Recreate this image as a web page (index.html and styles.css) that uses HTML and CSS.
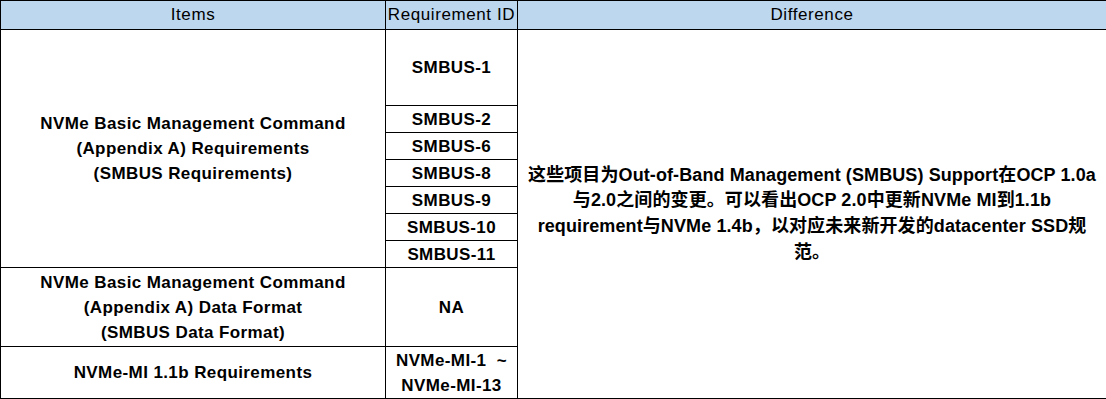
FILE: index.html
```html
<!DOCTYPE html>
<html lang="zh">
<head>
<meta charset="utf-8">
<link rel="stylesheet" href="styles.css">
</head>
<body>
<table class="sheet">
  <colgroup>
    <col class="c-items">
    <col class="c-req">
    <col class="c-diff">
  </colgroup>
  <thead>
    <tr class="head">
      <th>Items</th>
      <th>Requirement ID</th>
      <th>Difference</th>
    </tr>
  </thead>
  <tbody>
    <tr class="r-tall">
      <td rowspan="7" class="item">NVMe Basic Management Command<br>(Appendix A) Requirements<br>(SMBUS Requirements)</td>
      <td class="req">SMBUS-1</td>
      <td rowspan="9" class="diff"><span class="ln">这些项目为Out-of-Band Management (SMBUS) Support在OCP 1.0a</span><span class="ln">与2.0之间的变更。可以看出OCP 2.0中更新NVMe MI到1.1b</span><span class="ln">requirement与NVMe 1.4b，以对应未来新开发的datacenter SSD规</span><span class="ln">范。</span></td>
    </tr>
    <tr class="r-s"><td class="req">SMBUS-2</td></tr>
    <tr class="r-s"><td class="req">SMBUS-6</td></tr>
    <tr class="r-s"><td class="req">SMBUS-8</td></tr>
    <tr class="r-s"><td class="req">SMBUS-9</td></tr>
    <tr class="r-s"><td class="req">SMBUS-10</td></tr>
    <tr class="r-s"><td class="req">SMBUS-11</td></tr>
    <tr class="r-fmt">
      <td class="item">NVMe Basic Management Command<br>(Appendix A) Data Format<br>(SMBUS Data Format)</td>
      <td class="req">NA</td>
    </tr>
    <tr class="r-mi">
      <td class="item">NVMe-MI 1.1b Requirements</td>
      <td class="req">NVMe-MI-1&nbsp;&nbsp;~<br>NVMe-MI-13</td>
    </tr>
  </tbody>
</table>
</body>
</html>
```

FILE: styles.css
```css
html, body {
  margin: 0;
  padding: 0;
  background: #ffffff;
}

.sheet {
  border-collapse: collapse;
  table-layout: fixed;
  width: 1106px;
  font-family: "Liberation Sans", "Noto Sans CJK SC", sans-serif;
  color: #000;
}

.c-items { width: 385px; }
.c-req { width: 132px; }
.c-diff { width: 589px; }

.sheet th,
.sheet td {
  border: 1px solid #000;
  padding: 0;
  text-align: center;
  vertical-align: middle;
  white-space: nowrap;
}

.head th {
  background: #bdd7ee;
  font-weight: normal;
  font-size: 17px;
  letter-spacing: 0.6px;
  height: 28px;
}

.sheet td {
  font-weight: bold;
  font-size: 17px;
  letter-spacing: 0.4px;
  line-height: 25px;
}

.r-tall td.req { height: 75px; }
.r-s td { height: 26px; }
.r-fmt td { height: 78px; }
.r-mi td { height: 51px; }

.sheet td.diff {
  font-size: 18px;
  letter-spacing: 0.1px;
  line-height: 25.6px;
}

.ln {
  display: block;
}
```
